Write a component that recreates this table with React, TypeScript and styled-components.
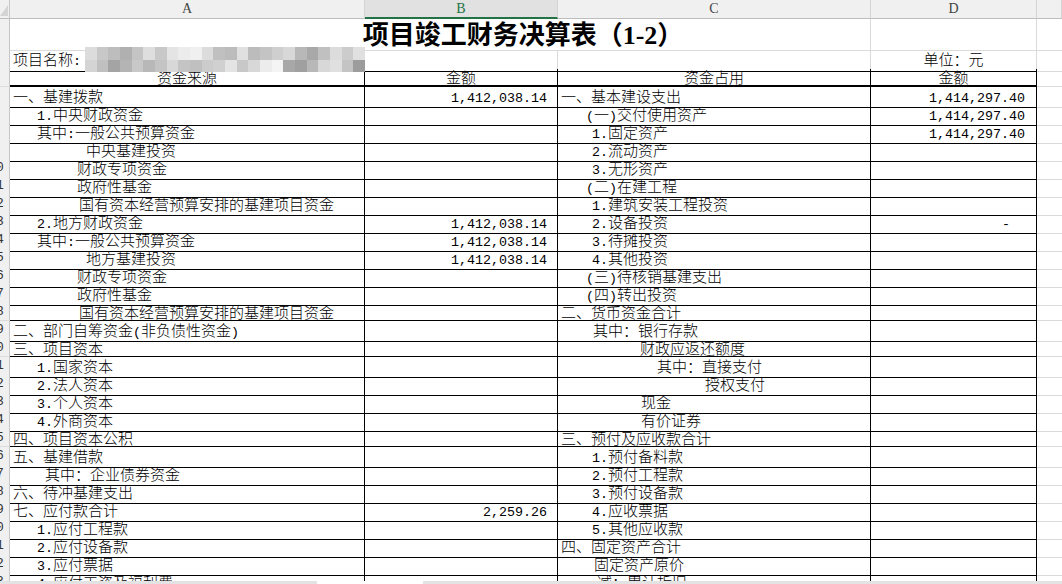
import React from "react";
import styled, { createGlobalStyle } from "styled-components";

const Global = createGlobalStyle`
  *, *::before, *::after { box-sizing: border-box; }
  html, body { margin: 0; padding: 0; background: #fff; }
  body { font-family: "Noto Sans CJK SC", "Liberation Sans", sans-serif; }
`;

const COLS = "10px 355px 193px 313px 166px 1fr";
const GRID = "#dadada";
const HEAD_BG = "#f0f0f0";

const Sheet = styled.div`
  position: relative;
  width: 1062px;
  height: 584px;
  overflow: hidden;
  background: #fff;
  font-family: "Noto Sans CJK SC", sans-serif;
  font-size: 15px;
  font-weight: 300;
  color: #000;
`;

const Row = styled.div<{ $h: number }>`
  position: relative;
  display: grid;
  grid-template-columns: ${COLS};
  height: ${(p) => p.$h}px;
`;

const Corner = styled.div`
  background: ${HEAD_BG};
  border-right: 1px solid #c6c6c6;
  border-bottom: 1px solid #bdbdbd;
  overflow: hidden;
  svg { display: block; }
`;

const ColHead = styled.div<{ $sel?: boolean }>`
  background: ${(p) => (p.$sel ? "#e1e1e1" : HEAD_BG)};
  border-right: 1px solid #d4d4d4;
  border-bottom: ${(p) => (p.$sel ? "2px solid #217346" : "1px solid #bdbdbd")};
  color: ${(p) => (p.$sel ? "#217346" : "#444")};
  font-family: "Liberation Serif", serif;
  font-weight: 400;
  font-size: 14px;
  display: flex;
  align-items: center;
  justify-content: center;
  padding-top: ${(p) => (p.$sel ? 1 : 0)}px;
`;

const RowHead = styled.div`
  background: ${HEAD_BG};
  border-right: 1px solid #c6c6c6;
  border-bottom: 1px solid #dcdcdc;
  overflow: hidden;
  font-family: "Liberation Mono", monospace;
  font-weight: 400;
  font-size: 13px;
  color: #333;
  line-height: 17px;
  white-space: nowrap;
`;

const RowNum = styled.span`
  display: block;
  width: 32px;
  margin-left: -20px;
  text-align: center;
`;

const Blank = styled.div`
  border-bottom: 1px solid ${GRID};
`;

const TitleCell = styled.div`
  grid-column: 2 / 6;
  border-right: 1px solid ${GRID};
  border-bottom: 1px solid ${GRID};
  background: linear-gradient(
    to right,
    transparent 860px,
    ${GRID} 860px,
    ${GRID} 861px,
    transparent 861px
  );
  text-align: center;
  font-weight: 700;
  font-size: 26px;
  line-height: 28px;
  white-space: nowrap;
`;

const TitleNum = styled.span`
  font-family: "Liberation Serif", serif;
  font-weight: 700;
`;

const InfoCell = styled.div<{ $span?: number; $align?: string; $pl?: number }>`
  grid-column: span ${(p) => p.$span ?? 1};
  border-right: 1px solid ${GRID};
  border-bottom: 1px solid #000;
  padding-left: ${(p) => p.$pl ?? 0}px;
  text-align: ${(p) => p.$align ?? "left"};
  line-height: 18px;
  white-space: pre;
`;

const Cell = styled.div<{
  $pl?: number;
  $pr?: number;
  $align?: string;
  $head?: boolean;
}>`
  border-right: 1px solid #000;
  border-bottom: ${(p) => (p.$head ? 2 : 1)}px solid #000;
  padding-left: ${(p) => p.$pl ?? 0}px;
  padding-right: ${(p) => p.$pr ?? 0}px;
  text-align: ${(p) => p.$align ?? "left"};
  line-height: ${(p) => (p.$head ? 16 : 17)}px;
  white-space: pre;
`;

const Half = styled.span`
  font-family: "Liberation Mono", monospace;
  font-weight: 400;
  font-size: 13.33px;
`;

const Mosaic = styled.div`
  position: absolute;
  left: 85px;
  top: -3px;
  width: 280px;
  height: 25px;
  display: grid;
  grid-template-columns: repeat(24, 1fr);
  grid-template-rows: repeat(2, 1fr);
  z-index: 2;
`;

const Tile = styled.div<{ $c: string }>`
  background: ${(p) => p.$c};
`;

const Strip = styled.div`
  position: absolute;
  left: 0;
  right: 0;
  bottom: 0;
  height: 3px;
  display: flex;
  z-index: 3;
`;

const StripPart = styled.div<{ $w?: number; $c: string }>`
  flex: ${(p) => (p.$w ? `0 0 ${p.$w}px` : "1 1 auto")};
  background: ${(p) => p.$c};
`;

function Txt({ s }: { s: string }) {
  const parts = s.match(/[\x20-\x7e]+|[^\x20-\x7e]+/g) || [];
  return (
    <>
      {parts.map((p, i) =>
        /^[\x20-\x7e]/.test(p) ? (
          <Half key={i}>{p}</Half>
        ) : (
          <React.Fragment key={i}>{p}</React.Fragment>
        )
      )}
    </>
  );
}

type R = [string, number, string, string, number, string];

const DATA: R[] = [
  ["一、基建拨款", 3, "1,412,038.14", "一、基本建设支出", 3, "1,414,297.40"],
  ["1.中央财政资金", 27, "", "(一)交付使用资产", 28, "1,414,297.40"],
  ["其中:一般公共预算资金", 27, "", "1.固定资产", 34, "1,414,297.40"],
  ["中央基建投资", 76, "", "2.流动资产", 34, ""],
  ["财政专项资金", 67, "", "3.无形资产", 34, ""],
  ["政府性基金", 67, "", "(二)在建工程", 28, ""],
  ["国有资本经营预算安排的基建项目资金", 69, "", "1.建筑安装工程投资", 34, ""],
  ["2.地方财政资金", 27, "1,412,038.14", "2.设备投资", 34, "-"],
  ["其中:一般公共预算资金", 27, "1,412,038.14", "3.待摊投资", 34, ""],
  ["地方基建投资", 76, "1,412,038.14", "4.其他投资", 34, ""],
  ["财政专项资金", 67, "", "(三)待核销基建支出", 28, ""],
  ["政府性基金", 67, "", "(四)转出投资", 28, ""],
  ["国有资本经营预算安排的基建项目资金", 69, "", "二、货币资金合计", 3, ""],
  ["二、部门自筹资金(非负债性资金)", 3, "", "其中：银行存款", 35, ""],
  ["三、项目资本", 3, "", "财政应返还额度", 82, ""],
  ["1.国家资本", 27, "", "其中：直接支付", 99, ""],
  ["2.法人资本", 27, "", "授权支付", 147, ""],
  ["3.个人资本", 27, "", "现金", 83, ""],
  ["4.外商资本", 27, "", "有价证券", 83, ""],
  ["四、项目资本公积", 3, "", "三、预付及应收款合计", 3, ""],
  ["五、基建借款", 3, "", "1.预付备料款", 34, ""],
  ["其中：企业债券资金", 35, "", "2.预付工程款", 34, ""],
  ["六、待冲基建支出", 3, "", "3.预付设备款", 34, ""],
  ["七、应付款合计", 3, "2,259.26", "4.应收票据", 34, ""],
  ["1.应付工程款", 27, "", "5.其他应收款", 34, ""],
  ["2.应付设备款", 27, "", "四、固定资产合计", 3, ""],
  ["3.应付票据", 27, "", "固定资产原价", 36, ""],
  ["4.应付工资及福利费", 27, "", "减：累计折旧", 39, ""],
];

const MOSAIC_TOP = [
  "#dcdcdc", "#c8c8c8", "#bdbdbd", "#b0b0b0", "#c4c4c4", "#dedede", "#c8c8c8", "#e4e4e4",
  "#ececec", "#f0f0f0", "#dcdcdc", "#c0c0c0", "#bcbcbc", "#e0e0e0", "#bcbcbc", "#c4c4c4",
  "#cfcfcf", "#d8d8d8", "#b8b8b8", "#a8a8a8", "#c0c0c0", "#dcdcdc", "#cccccc", "#e0e0e0",
];
const MOSAIC_BOT = [
  "#d4d4d4", "#c0c0c0", "#a4a4a4", "#b4b4b4", "#c8c8c8", "#b8b8b8", "#c4c4c4", "#d8d8d8",
  "#c4c4c4", "#c0c0c0", "#cccccc", "#d0d0d0", "#e4e4e4", "#c8c8c8", "#d8d8d8", "#ececec",
  "#f4f4f4", "#a8a8a8", "#a0a0a0", "#b8b8b8", "#d8d8d8", "#e0e0e0", "#c4c4c4", "#9c9c9c",
];

export default function App() {
  return (
    <>
      <Global />
      <Sheet>
        <Row $h={19}>
          <Corner>
            <svg width="10" height="18" viewBox="0 0 10 18">
              <polygon points="8,5 8,16 0,16" fill="#d4d4d4" />
            </svg>
          </Corner>
          <ColHead>A</ColHead>
          <ColHead $sel>B</ColHead>
          <ColHead>C</ColHead>
          <ColHead>D</ColHead>
          <ColHead />
        </Row>

        <Row $h={31}>
          <RowHead />
          <TitleCell>
            项目竣工财务决算表（<TitleNum>1-2</TitleNum>）
          </TitleCell>
          <Blank />
        </Row>

        <Row $h={19}>
          <RowHead />
          <InfoCell $span={2} $pl={3}>
            <Txt s="项目名称:" />
          </InfoCell>
          <InfoCell />
          <InfoCell $align="center">单位：元</InfoCell>
          <Blank />
          <Mosaic>
            {MOSAIC_TOP.concat(MOSAIC_BOT).map((c, i) => (
              <Tile key={i} $c={c} />
            ))}
          </Mosaic>
        </Row>

        <Row $h={18}>
          <RowHead />
          <Cell $head $align="center">资金来源</Cell>
          <Cell $head $align="center">金额</Cell>
          <Cell $head $align="center">资金占用</Cell>
          <Cell $head $align="center">金额</Cell>
          <Blank />
        </Row>

        {DATA.map(([a, ai, b, c, ci, d], i) => (
          <Row $h={18} key={i}>
            <RowHead>
              <RowNum>{i + 6}</RowNum>
            </RowHead>
            <Cell $pl={ai}>
              <Txt s={a} />
            </Cell>
            <Cell $align="right" $pr={10}>
              <Txt s={b} />
            </Cell>
            <Cell $pl={ci}>
              <Txt s={c} />
            </Cell>
            <Cell $align="right" $pr={d === "-" ? 26 : 11}>
              <Txt s={d} />
            </Cell>
            <Blank />
          </Row>
        ))}

        <Strip>
          <StripPart $w={317} $c="#e3e3e3" />
          <StripPart $w={106} $c="#ffffff" />
          <StripPart $c="#e3e3e3" />
        </Strip>
      </Sheet>
    </>
  );
}
